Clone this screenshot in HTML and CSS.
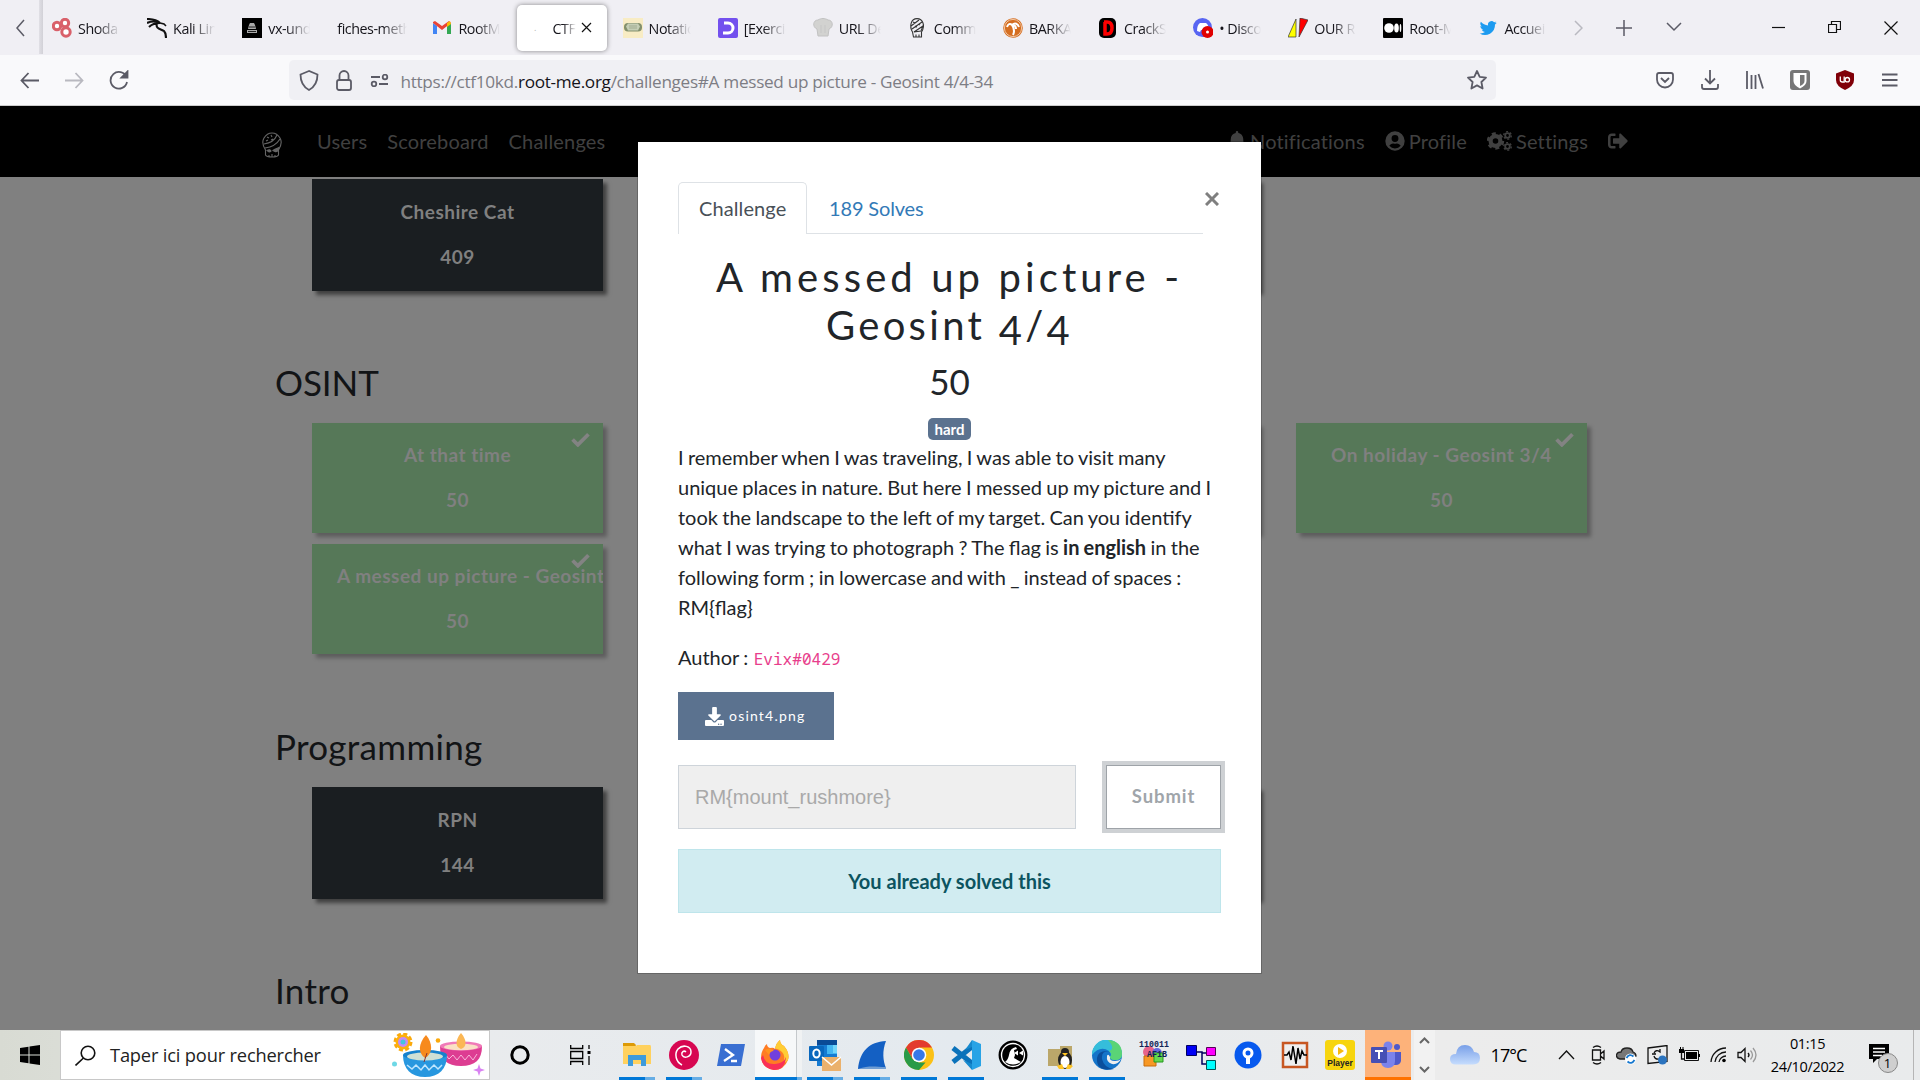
FILE: index.html
```html
<!DOCTYPE html>
<html lang="fr">
<head>
<meta charset="utf-8">
<title>CTF</title>
<link rel="stylesheet" href="styles.css">
</head>
<body>
<div class="screen">
  <header class="tabbar">
    <div class="tab-scroll"><svg width="10" height="18" viewBox="0 0 10 18" class="line"><path d="M9 1 2 9l7 8"/></svg></div>
    <div class="tab-edge"></div>
    <div class="tabs">
      <div class="tab"><svg class="fav" viewBox="0 0 20 20"><g fill="#fff" stroke="#d9606a" stroke-width="3"><circle cx="5" cy="8" r="3.7"/><circle cx="13" cy="5" r="3.7"/><circle cx="14" cy="14" r="4.2"/></g></svg><span>Shoda</span></div>
      <div class="tab"><svg class="fav" viewBox="0 0 20 20" fill="none" stroke="#111" stroke-width="1.6"><path d="M0 1c6 0 10 1 13 4M0 5c5-2 9-2 13 0M2 9c3-3 6-4 11-4M10 5c-2 6 4 6 7 8 2 2 2 4 2 7" stroke-width="2.1"/><path d="m13 5 4 1 2 2"/></svg><span>Kali Lin</span></div>
      <div class="tab"><svg class="fav" viewBox="0 0 20 20"><path fill="#000" d="M0 0h20v20H0z"/><path fill="#aaa" d="M7 7l1-2h4l1 2 1 4H6zM5 12h10v3H5z"/><path stroke="#222" d="M7 9h6M6 13.500h8"/></svg><span>vx-und</span></div>
      <div class="tab"><span class="wide">fiches-meth</span></div>
      <div class="tab"><svg class="fav" viewBox="0 0 20 20"><path fill="#4285f4" d="M1 5v11h4V8z"/><path fill="#34a853" d="M15 8v8h4V5z"/><path fill="#ea4335" d="M1 4l2-1 7 5 7-5 2 2-9 7-9-7z"/><path fill="#fbbc04" d="m15 5 3-2 1 3-4 3z"/></svg><span>RootM</span></div>
      <div class="tab active"><i class="fav-blank">.</i><span>CTF</span><svg class="tab-x line dark" width="11" height="11" viewBox="0 0 11 11"><path d="m1 1 9 9M10 1l-9 9"/></svg></div>
      <div class="tab"><svg class="fav" viewBox="0 0 20 20"><path fill="#f8ecc4" d="M0 0h20v20H0z"/><rect x="1" y="5" width="18" height="8.500" rx="4" fill="#83906d"/><path d="M5 5.500h10l2 3-2 4H5l-2-4z" fill="#c5ceb5"/><path d="M6 8h8M6 10h8" stroke="#a3ad92"/></svg><span>Notatio</span></div>
      <div class="tab"><svg class="fav" viewBox="0 0 20 20"><rect width="20" height="20" rx="2" fill="#7350ee"/><path d="M6 5h4a5 5 0 0 1 0 10H5" fill="none" stroke="#fff" stroke-width="3"/></svg><span>[Exercic</span></div>
      <div class="tab"><svg class="fav" viewBox="0 0 20 20"><path d="M4 11C-1 9 0 2 5 2c3-2 7-2 10 0 5 0 6 7 1 9l-1 7H5z" fill="#d2d2d0" stroke="#c2c2c2"/><path d="M8 7v8m4-8v8" stroke="#c6c6c6"/></svg><span>URL De</span></div>
      <div class="tab"><svg class="fav" viewBox="0 0 20 20" fill="none" stroke="#333" stroke-width="1.1"><path d="M4.500 14C1 8 3 .600 9 .600s8.500 7.400 4.500 13.400v5h-8z"/><path d="M3 8 11 2M4 11l10-7M6 14l9-6-2 5zM8 16.500v2.500m3-2.500v2.500M5 4l2 1m0 3 2 1m2-3 1 1"/></svg><span>Comm</span></div>
      <div class="tab"><svg class="fav" viewBox="0 0 20 20"><circle cx="10" cy="10" r="9.800" fill="#d56e21"/><circle cx="10" cy="10" r="8.600" fill="none" stroke="#f7dcc4" stroke-width=".8"/><path d="M10 17c2-4 1-7-1-10M9 7C7 5 5 6 4 9m5-2c3-3 6-1 7 2M9 7c2 0 4 1 4 4" stroke="#fff" stroke-width="2" fill="none"/></svg><span>BARKA</span></div>
      <div class="tab"><svg class="fav" viewBox="0 0 20 20"><rect x="1" width="17" height="20" rx="5"/><path fill="none" stroke="red" stroke-width="3.500" d="M6 4h3q5 0 5 6t-5 6H7V4"/></svg><span>CrackS</span></div>
      <div class="tab"><svg class="fav" viewBox="0 0 20 20"><circle cx="9.500" cy="9.500" r="9.500" fill="#5865f2"/><path fill="#fff" d="M4 13q0-6 3-8l6 0q3 2 3 8l-3 1-1-2H8l-1 2z"/><circle cx="14.500" cy="14" r="6" fill="#e00000"/><circle cx="14.500" cy="14" r="1.500" fill="#fff"/></svg><span>• Disco</span></div>
      <div class="tab"><svg class="fav" viewBox="0 0 20 20" stroke="#333" stroke-width=".7"><path fill="#ff0" d="M8 1v18H0z"/><path fill="red" d="m12 0 8 2-9 17z"/></svg><span>OUR R</span></div>
      <div class="tab"><svg class="fav" viewBox="0 0 20 20"><rect width="20" height="20" rx="1"/><g fill="#fff"><circle cx="6" cy="10" r="4.800"/><ellipse cx="13.500" cy="10" rx="2.300" ry="4.500"/><ellipse cx="17.500" cy="10" rx=".8" ry="4"/></g></svg><span>Root-M</span></div>
      <div class="tab"><svg class="fav" viewBox="0 0 24 24" fill="#1d9bf0"><path d="M22.500 5.700a8 8 0 0 1-2.400.7 4.200 4.200 0 0 0 1.800-2.300 8 8 0 0 1-2.600 1 4.200 4.200 0 0 0-7.200 3.800A12 12 0 0 1 3.500 4.500a4.200 4.200 0 0 0 1.300 5.600 4 4 0 0 1-1.900-.5 4.200 4.200 0 0 0 3.400 4.200 4 4 0 0 1-1.900.1 4.200 4.200 0 0 0 3.900 2.900A8.500 8.500 0 0 1 2 18.500a12 12 0 0 0 18.400-10.600 8.600 8.600 0 0 0 2.100-2.200z"/></svg><span>Accuei</span></div>
    </div>
    <div class="tab-tools">
      <svg class="line faint" width="9" height="16" viewBox="0 0 9 16"><path d="m1 1 7 7-7 7"/></svg>
      <svg class="line" width="16" height="16" viewBox="0 0 16 16"><path d="M8 0v16M0 8h16"/></svg>
      <svg class="line" width="16" height="10" viewBox="0 0 16 10"><path d="m1 1 7 7 7-7"/></svg>
    </div>
    <div class="win-tools">
      <svg class="line dark" width="13" height="13" viewBox="0 0 13 13"><path d="M0 6.500h13"/></svg>
      <svg class="line dark" width="13" height="13" viewBox="0 0 13 13"><path d="M.5 3.500h8v8h-8zM3.500 3V.5h9v8H9"/></svg>
      <svg class="line dark" width="14" height="14" viewBox="0 0 14 14"><path d="m.5.5 13 13m0-13-13 13"/></svg>
    </div>
  </header>

  <div class="toolbar">
    <div class="cells history">
      <svg class="line thick" width="19" height="17" viewBox="0 0 19 17"><path d="M19 8.500H1.500M8.500 1 1.500 8.500 8.500 16"/></svg>
      <svg class="line thick faint" width="19" height="17" viewBox="0 0 19 17"><path d="M0 8.500h17.500M10.500 1l7 7.500-7 7.500"/></svg>
      <svg class="line thick" width="20" height="20" viewBox="0 0 20 20"><path d="M17.500 7A8.300 8.300 0 1 0 18 12"/><path d="M12.500 7.500h6v-6z" fill="#5b5b66"/></svg>
    </div>
    <div class="urlbar">
      <svg class="line thick" width="20" height="21" viewBox="0 0 20 21"><path d="M10 1 1.500 4.500c0 7 2 12 8.500 15.500 6.500-3.500 8.500-8.500 8.500-15.500z"/></svg>
      <svg class="line thick" width="16" height="21" viewBox="0 0 16 21"><rect x="1" y="10" width="14" height="10" rx="2"/><path d="M3.500 10V5.500a4.500 4.500 0 0 1 9 0V10"/></svg>
      <svg class="line thick" width="19" height="13" viewBox="0 0 19 13"><circle cx="15" cy="3" r="2.300"/><circle cx="4" cy="10" r="2.300"/><path d="M1 3h9M9 10h9"/></svg>
      <div class="url">https://ctf10kd.<b>root-me.org</b>/challenges#A messed up picture - Geosint 4/4-34</div>
      <svg class="line thick" width="20" height="20" viewBox="0 0 20 20"><path d="m10 1 2.700 5.800 6.300.8-4.600 4.400 1.200 6.500L10 15.400l-5.600 3.100L5.600 12 1 7.600l6.300-.8z" stroke-linejoin="round"/></svg>
    </div>
    <div class="cells">
      <svg class="line thick" width="18" height="17" viewBox="0 0 18 17"><path d="M3 1h12q2 0 2 2v4.500a8 8 0 0 1-16 0V3q0-2 2-2zM5 6l4 4 4-4"/></svg>
      <svg class="line thick" width="18" height="20" viewBox="0 0 18 20"><path d="M9 0v13M4 8.500 9 13.500l5-5M1 14v3q0 2 2 2h12q2 0 2-2v-3"/></svg>
      <svg class="line thick" width="18" height="18" viewBox="0 0 18 18"><path d="M1 0v18M5.500 4v14M9.500 4v14M12.500 3l4.500 14.500"/></svg>
      <svg width="20" height="20" viewBox="0 0 20 20"><rect width="20" height="20" rx="3" fill="#777"/><path d="M3.500 3h13v8q0 4-6.500 7.500Q3.500 15 3.500 11z" fill="#fff"/><path d="M10 5h4.500v6q0 3-4.500 5z" fill="#777"/></svg>
      <svg width="18" height="20" viewBox="0 0 18 20"><path d="m9 0 9 3.500V10q0 6-9 10-9-4-9-10V3.500z" fill="#800008"/><path d="M4.300 6.500V10q0 2 2 2h1.900V6.500" fill="none" stroke="#fff" stroke-width="1.300"/><circle cx="11.300" cy="9.700" r="2.200" fill="none" stroke="#fff" stroke-width="1.300"/></svg>
      <svg class="line thick" width="16" height="14" viewBox="0 0 16 14"><path d="M0 1.500h15.500M0 7h15.500M0 12.500h15.500"/></svg>
    </div>
  </div>

  <main class="page">
    <nav class="navbar">
      <svg class="brand" width="20" height="26" viewBox="0 0 20 26"><path d="M3.500 18Q-1 11 2 6q3-5 8-5t8 5q3 5-1.500 12v5q-1 2-6.500 2t-6.500-2z"/><path d="M2 12c7-1 11-4 13-9M3 16c8-1 12-4 15-9M5 5l2 1M9 3l1 2M4 9l2-1M9 8l2-1M7 23v2M10 22v3M13 23v2"/><path d="M5 18.500q3-1.500 4 .500-2 2-4-.500zm6 0q1-1 6-3-1 5-4 4z" fill="#666"/></svg>
      <div class="nav-left"><a>Users</a><a>Scoreboard</a><a>Challenges</a></div>
      <div class="nav-right">
        <a><svg width="18" height="20" viewBox="0 0 448 512"><path d="M224 512c35 0 64-29 64-64H160c0 35 29 64 64 64zm215-150c-19-21-55-52-55-154 0-78-54-140-128-155V32a32 32 0 0 0-64 0v21C118 68 64 130 64 208c0 102-36 133-55 154-6 6-9 14-9 22 0 16 13 32 32 32h384c19 0 32-16 32-32 0-8-3-16-9-22z"/></svg><span>Notifications</span></a>
        <a><svg width="20" height="20" viewBox="0 0 496 512"><path d="M248 8a248 248 0 1 0 0 496 248 248 0 0 0 0-496zm0 96a88 88 0 1 1 0 176 88 88 0 0 1 0-176zm0 344a191 191 0 0 1-146-68c19-35 55-60 98-60 3 0 5 0 7 1a135 135 0 0 0 82 0l7-1c43 0 79 25 98 60a191 191 0 0 1-146 68z"/></svg><span>Profile</span></a>
        <a><svg width="25" height="20" viewBox="0 0 25 20" class="gears"><circle cx="8.500" cy="10" r="4.900" stroke-width="4.200"/><circle cx="8.500" cy="10" r="7.500" stroke-width="2.400" stroke-dasharray="4 3.850"/><circle cx="20.500" cy="4.500" r="2.300" stroke-width="1.800"/><circle cx="20.500" cy="4.500" r="3.800" stroke-width="1.300" stroke-dasharray="2 2"/><circle cx="20.500" cy="15.500" r="2.300" stroke-width="1.800"/><circle cx="20.500" cy="15.500" r="3.800" stroke-width="1.300" stroke-dasharray="2 2"/></svg><span>Settings</span></a>
        <a><svg width="20" height="20" viewBox="0 0 512 512"><path d="m497 273-168 168c-15 15-41 4-41-17v-96H152c-13 0-24-11-24-24v-96c0-13 11-24 24-24h136V88c0-21 26-32 41-17l168 168c9 9 9 25 0 34zM192 436v-40c0-7-5-12-12-12H96c-18 0-32-14-32-32V160c0-18 14-32 32-32h84c7 0 12-5 12-12V76c0-7-5-12-12-12H96c-53 0-96 43-96 96v192c0 53 43 96 96 96h84c7 0 12-5 12-12z"/></svg></a>
      </div>
    </nav>

    <section class="cat first">
      <div class="grid">
        <article class="card"><p>Cheshire Cat</p><p>409</p></article>
        <article class="card"></article>
        <article class="card"></article>
      </div>
    </section>
    <section class="cat osint">
      <h3>OSINT</h3>
      <div class="grid">
        <article class="card solved"><svg class="check" viewBox="0 0 18 14"><path d="m1.500 7 5 5L16.500 2"/></svg><p>At that time</p><p>50</p></article>
        <article class="card solved"></article>
        <article class="card solved"></article>
        <article class="card solved"><svg class="check" viewBox="0 0 18 14"><path d="m1.500 7 5 5L16.500 2"/></svg><p>On holiday - Geosint 3/4</p><p>50</p></article>
        <article class="card solved"><svg class="check" viewBox="0 0 18 14"><path d="m1.500 7 5 5L16.500 2"/></svg><p class="long">A messed up picture - Geosint</p><p>50</p></article>
      </div>
    </section>
    <section class="cat">
      <h3>Programming</h3>
      <div class="grid">
        <article class="card"><p>RPN</p><p>144</p></article>
        <article class="card"></article>
        <article class="card"></article>
      </div>
    </section>
    <section class="cat">
      <h3>Intro</h3>
    </section>
  </main>

  <div class="modal">
    <div class="modal-top">
      <div class="pills"><div class="pill on">Challenge</div><div class="pill">189 Solves</div></div>
      <svg class="close" width="14" height="14" viewBox="0 0 14 14"><path d="m1 1 12 12M13 1 1 13"/></svg>
    </div>
    <h2><span class="t1">A messed up picture -</span><br><span class="t2">Geosint <i>4</i>/<i>4</i></span></h2>
    <div class="points">50</div>
    <div class="badge-row"><span class="badge">hard</span></div>
    <p class="desc">I remember when I was traveling, I was able to visit many<br>unique places in nature. But here I messed up my picture and I<br>took the landscape to the left of my target. Can you identify<br>what I was trying to photograph ? The flag is <b>in english</b> in the<br>following form ; in lowercase and with _ instead of spaces :<br>RM{flag}</p>
    <p class="desc">Author : <code>Evix#0429</code></p>
    <div class="file"><svg width="19" height="19" viewBox="0 0 512 512" fill="#fff"><path d="M216 0h80c13 0 24 11 24 24v168h88c18 0 27 21 14 34L270 378c-7 7-20 7-28 0L90 226c-13-13-4-34 14-34h88V24c0-13 11-24 24-24zm296 376v112c0 13-11 24-24 24H24c-13 0-24-11-24-24V376c0-13 11-24 24-24h147l49 49c20 20 52 20 72 0l49-49h147c13 0 24 11 24 24zm-124 88a20 20 0 1 0-40 0 20 20 0 0 0 40 0zm64 0a20 20 0 1 0-40 0 20 20 0 0 0 40 0z"/></svg><span>osint4.png</span></div>
    <div class="answer"><div class="field">RM{mount_rushmore}</div><div class="submit">Submit</div></div>
    <div class="alert">You already solved this</div>
  </div>

  <footer class="taskbar">
    <div class="start"><svg width="20" height="20" viewBox="0 0 20 20"><path d="M0 3l8.500-1.200v7.700H0zM9.500 1.600 20 0v9.500H9.500zM0 10.500h8.500v7.700L0 17zM9.500 10.500H20V20L9.500 18.400z"/></svg></div>
    <div class="search">
      <svg class="lens" width="21" height="21" viewBox="0 0 21 21"><circle cx="13" cy="8" r="6.800"/><path d="M8.500 13 .5 20.500"/></svg>
      <span>Taper ici pour rechercher</span>
      <svg class="candles" width="93" height="45" viewBox="0 0 93 45">
        <circle cx="11" cy="9" r="8" fill="none" stroke="#fba90c" stroke-width="3" stroke-dasharray="4 2.280"/><circle cx="11" cy="9" r="7.500" fill="#fdb00e"/><circle cx="11" cy="9" r="5" fill="#c58af5"/><circle cx="11" cy="9" r="2.500" fill="#45c5e0"/><circle cx="46" cy="7.500" r="2.300" fill="#fba90c"/><circle cx="2.500" cy="31" r="2.500" fill="#6ed8e6"/>
        <path d="M48 13c0 14 7 20 21 20s21-6 21-20z" fill="#dd3d92"/><ellipse cx="69" cy="13" rx="21" ry="4.500" fill="#f07ab8"/><ellipse cx="69" cy="14" rx="17" ry="3.300" fill="#fae0c5"/><path d="M69 0c-6 7-6 14 0 16 6-2 6-9 0-16z" fill="#fbb755"/><path d="m53 21 4 5 4-4 4 5 4-5 4 5 4-5 4 5 4-6" fill="none" stroke="#f9b6da"/>
        <path d="M11 22c0 14 8 22 22 22s22-8 22-22z" fill="#2797df"/><ellipse cx="33" cy="22" rx="22" ry="5" fill="#1681cd"/><ellipse cx="33" cy="23.500" rx="18" ry="4" fill="#cfe0d5"/><path d="M34 2c-8 9-8 18-1 23 8-4 8-15 1-23z" fill="#f78a1d"/><path d="M32 29l3-9" stroke="#833"/><path d="m15 32 5 4 4-4 5 5 4-5 4 5 5-5 4 4 4-4" fill="none" stroke="#bfe6ff" stroke-width="1.500"/>
        <path d="m87 31 1.500 4.500L93 37l-4.500 1.500L87 43l-1.500-4.500L81 37l4.500-1.500z" fill="#d982f2"/>
      </svg>
    </div>
    <div class="sys"><svg width="20" height="20" viewBox="0 0 20 20"><circle cx="10" cy="10" r="8.200" fill="none" stroke="#000" stroke-width="3"/></svg></div>
    <div class="sys"><svg width="21" height="20" viewBox="0 0 21 20" fill="none" stroke="#000" stroke-width="1.300"><path d="M.7 0v3.500h12V0M.7 20v-3.500h12V20M.7 6.500h12v7H.7zM19 0v4M19 11v9"/><path d="M17.500 6h3v3h-3z" fill="#000" stroke="none"/></svg></div>

    <div class="apps">
      <div class="app many"><svg width="30" height="30" viewBox="0 0 30 30"><path d="M1 3h11l2 2-2 4H1z" fill="#dd9a06"/><path d="M1 6h13l1-1h13q1 0 1 2v17H1z" fill="#ffd15e"/><path d="M6 26V15h18v11h-5v-6h-8v6z" fill="#3e9bdb"/></svg></div>
      <div class="app many"><svg width="30" height="30" viewBox="0 0 30 30"><circle cx="15" cy="15" r="15" fill="#d70751"/><path d="M13 25C7 22 5 14 9 9c5-5 13-3 13 3 0 5-7 7-9 3-1-3 2-5 4-3" fill="none" stroke="#fff" stroke-width="1.500"/></svg></div>
      <div class="app none"><svg width="30" height="30" viewBox="0 0 30 30"><path d="M5 4h24l-4 22H1z" fill="#396fd2"/><path d="m9 9 8 6-9 6m7 0h6" fill="none" stroke="#fff" stroke-width="2.300"/></svg></div>
      <div class="app active-app"><svg width="30" height="30" viewBox="0 0 30 30"><path d="M4 8q1-3 3-4 0 3 3 4 4-1 5 1 1-6 5-9 0 4 4 6 6 7 4 14-4 10-14 10Q3 29 1 18 1 12 4 8z" fill="#ff7c24"/><path d="M20 0q0 4 4 6 6 7 4 14-2 3-5 3 3-7-1-11-5-4-7-3 1-6 5-9z" fill="#ffcd35"/><path d="M3 15q2 10 12 9 9-1 11-7-1 13-12 13Q3 29 1 18z" fill="#f93058"/><circle cx="15" cy="15" r="5.500" fill="#7140dc"/><path d="M5 10q5-3 9 1-4 0-5 4z" fill="#ff951f"/></svg></div>
      <div class="app many"><svg width="32" height="32" viewBox="0 0 32 32"><path d="M8 1h20v26H8z" fill="#167bd2"/><path d="M8 1h20v5H8z" fill="#0a4b97"/><path d="M18 6h10v9H18z" fill="#43b6f2"/><path d="M24 6h4v8h-4z" fill="#73d6fb"/><rect y="7" width="15" height="15" rx="1" fill="#0867bd"/><ellipse cx="7.500" cy="14.500" rx="3.200" ry="4" fill="none" stroke="#fff" stroke-width="2"/><path d="M13 18h19v14H13z" fill="#ebb16c"/><path d="m13 18 9.500 8 9.500-8" fill="none" stroke="#fff" stroke-width="1.500"/></svg></div>
      <div class="app many"><svg width="30" height="30" viewBox="0 0 30 30"><path d="M1 29C3 11 12 2 29 1c-4 10-3 20 0 27z" fill="#1460c3"/><path d="M1 29c12-4 17-2 28-2v2z" fill="#6f9dd3"/></svg></div>
      <div class="app"><svg width="30" height="30" viewBox="0 0 30 30"><circle cx="15" cy="15" r="15" fill="#fbc116"/><path d="M2 7.500A15 15 0 0 1 28 7.500H15L8.500 19z" fill="#e33b2e"/><path d="M2 7.500 8.500 19 15 22.500h6.500L15 30A15 15 0 0 1 2 7.500z" fill="#299a47"/><circle cx="15" cy="15" r="7.300" fill="#fff"/><circle cx="15" cy="15" r="5.800" fill="#3878e8"/></svg></div>
      <div class="app"><svg width="30" height="30" viewBox="0 0 30 30"><path d="M2 8 22 24M2 22 22 6" stroke="#0b72ba" stroke-width="5"/><path d="m21 0 9 4v22l-9 4z" fill="#28a3e6"/><path d="m21 0-7 10 7-3zM21 30 12 20l9 4z" fill="#168ace"/></svg></div>
      <div class="app none"><svg width="30" height="30" viewBox="0 0 30 30"><circle cx="15" cy="15" r="13.300" fill="#fff" stroke="#000" stroke-width="2.300"/><circle cx="15" cy="15" r="10.800"/><path d="M7 22q3-2 4-7 1-7 7-8l1 2-3 1 1 5-1 3 7 4q-8 5-16 0z" fill="#fff"/><path d="m16 13 4-2.500v5zm5 0 4-2.500v5z" fill="#fff"/></svg></div>
      <div class="app"><svg width="30" height="30" viewBox="0 0 30 30"><path d="M3 9h12V6h12v20H3z" fill="#bba76a"/><ellipse cx="20" cy="20" rx="7" ry="9" fill="#222"/><circle cx="20" cy="12" r="4" fill="#222"/><ellipse cx="20" cy="22" rx="4.500" ry="6" fill="#fff"/><path d="m17 13 3 3 3-3zM12 26l5-2 2 5h-5zm11-2 5 2-3 3h-4z" fill="#ffc524"/></svg></div>
      <div class="app"><svg width="30" height="30" viewBox="0 0 30 30"><circle cx="15" cy="15" r="15" fill="#1474c9"/><path d="M0 15A15 15 0 0 1 30 14q0 6-7 6-5 0-5-3 2-3-1-6Q8 5 0 15z" fill="#35bddb"/><path d="M16 0q14 1 14 14 0 6-7 6-5 0-5-3 3-3-1-6 7-2-1-11z" fill="#5ad476"/><path d="M17 11q-8 0-7 8 2 9 12 10Q4 32 5 18q1-8 12-7z" fill="#0a4e9c"/><path d="M18 17q-1 4 5 4 4 0 6-2-3 6-9 5-6-2-5-8 1-3 3 1z" fill="#eee"/></svg></div>
      <div class="app none"><svg width="30" height="30" viewBox="0 0 30 30"><circle cx="10" cy="12" r="6" fill="#e7638b"/><circle cx="18" cy="13" r="5" fill="#6566dc"/><path d="M5 16h12v10H5z" fill="#f79824" stroke="#c96d0a"/><path d="M15 13h9v9h-9z" fill="#65d950" stroke="#259720"/><g class="bits"><text x="0" y="7">110011</text><text x="8" y="17">AF1B</text></g></svg></div>
      <div class="app none"><svg width="30" height="30" viewBox="0 0 30 30"><path d="M11 12h5v12h5M16 13h5" stroke="#00005d" stroke-width="1.500" fill="none"/><path fill="#0000f5" stroke="#000060" d="M.5 5.500h10v10H.5z"/><path fill="#f0f" stroke="#505" d="M20.500 7.500h9v8h-9z"/><path fill="#0ff" stroke="#055" d="M20.500 20.500h9v9h-9z"/></svg></div>
      <div class="app none"><svg width="28" height="28" viewBox="0 0 28 28"><circle cx="14" cy="14" r="13.500" fill="#0759ee"/><circle cx="14" cy="12" r="4" fill="none" stroke="#fff" stroke-width="3"/><path d="M12 15h4v8h-4z" fill="#fff"/></svg></div>
      <div class="app none"><svg width="28" height="28" viewBox="0 0 28 28"><path d="M2 2h24v24H2z" fill="#eee" stroke="#c75621" stroke-width="2.500"/><path d="M3 14h3l2-3 2 8 2-14 3 18 2-16 2 11 2-8 2 4h3" fill="none" stroke="#000" stroke-width="1.500"/></svg></div>
      <div class="app none player-app"><svg width="30" height="30" viewBox="0 0 30 30"><rect width="30" height="30" rx="3" fill="#f7d50e"/><circle cx="15" cy="11" r="7" fill="#fff"/><path d="m13 7 6 4-6 4z" fill="#f7ba0e"/><text x="15" y="25.500" text-anchor="middle" class="player">Player</text></svg></div>
      <div class="app teams"><svg width="30" height="30" viewBox="0 0 30 30"><circle cx="17" cy="6" r="4.500" fill="#7b83eb"/><circle cx="26" cy="7" r="3" fill="#5059c9"/><path d="M21 12h9v9q-1 4-5 4h-4z" fill="#5059c9"/><path d="M10 12h14v9q0 7-7 7t-7-7z" fill="#7b83eb"/><rect y="7" width="16" height="16" rx="1" fill="#4650b5"/><path d="M4 11h8M8 11v8" stroke="#fff" stroke-width="2"/></svg></div>
    </div>
    <div class="scroller"><svg width="11" height="7" viewBox="0 0 11 7"><path d="m1 6 4.500-4.500L10 6"/></svg><svg width="11" height="7" viewBox="0 0 11 7"><path d="m1 1 4.500 4.500L10 1"/></svg></div>
    <div class="weather"><svg width="30" height="20" viewBox="0 0 30 20"><defs><linearGradient id="sky" x2="0" y2="1"><stop stop-color="#789fe8"/><stop offset="1" stop-color="#c5dcfd"/></linearGradient></defs><path d="M6 19.500q-6 0-6-5.500 0-5 6-5Q7 0 15 0q7 0 9 7 6 0 6 6 0 6.500-7 6.500z" fill="url(#sky)"/></svg><span>17°C</span></div>
    <div class="tray">
      <svg width="17" height="20" viewBox="0 0 17 20"><path d="m1 14 7.500-8 7.500 8"/></svg>
      <svg class="cam" width="16" height="20" viewBox="0 0 16 20"><path d="M2.500 5h8v10h-8zM10.500 9l3.500-3v8l-3.500-3M3 2.500q4-3 8 0M3 17.500q4 3 8 0"/></svg>
      <svg width="21" height="20" viewBox="0 0 21 20"><path d="M4 14q-4-1-3.500-4T5 7q1-4 6-4 5 0 6 4 3 1 3 4l-8 3z" fill="#777" stroke="#222"/><circle cx="14.500" cy="14" r="5.500" fill="#fff" stroke="none"/><path d="M10.500 13q3-5 7-1.500M18.500 15q-3 5-7 1.500" stroke="#1678cf" stroke-width="1.800"/></svg>
      <svg width="21" height="20" viewBox="0 0 21 20"><path d="M1 3 20 .500v16L1 18.500zM7 8q2-4 6-1v-3M7 11q1 4 6 3M5 9h4"/><circle cx="15.500" cy="15" r="4.500" fill="#2b74bf" stroke="none"/></svg>
      <svg width="21" height="20" viewBox="0 0 21 20"><path d="M5.500 5.500h14v10h-14z" stroke-width="1"/><path d="M7 7h11v7H7zM19 9h2v3h-2zM0 4h5v4H0zM1 2h1v3H1zM3.500 2h1v3h-1z" fill="#000" stroke="none"/><path d="M2.500 8v6h3"/></svg>
      <svg width="17" height="20" viewBox="0 0 17 20"><path d="M1 17A15 15 0 0 1 16 3M5 17A11 11 0 0 1 16 7M9 17a7 7 0 0 1 7-6"/><circle cx="14" cy="15.500" r="1.800" fill="#000" stroke="none"/></svg>
      <svg width="21" height="20" viewBox="0 0 21 20"><path d="M1 7.500h3l4-4v13l-4-4H1zM11 8q2 2 0 4"/><path d="M13.500 5.500q4 4.500 0 9M16 3q6 7 0 14" stroke="#999"/></svg>
    </div>
    <div class="clock"><span>01:15</span><span>24/10/2022</span></div>
    <div class="notif"><svg width="20" height="20" viewBox="0 0 20 20"><path d="M0 0h20v15H8l-4 4v-4H0z"/><path d="M4 4.500h12M4 8h12M4 11.500h9" stroke="#fff" stroke-width="1.300"/></svg><span class="count">1</span></div>
    <div class="desk"></div>
  </footer>
</div>
</body>
</html>
```
FILE: styles.css
```css
* { box-sizing: border-box; }
body { margin: 0; overflow: hidden; background: #808080; }
svg { display: block; flex: none; }
p, h2, h3 { margin: 0; }
h2, h3 { font-weight: 400; }
.screen { position: relative; width: 1920px; height: 1080px; overflow: hidden; display: flex; flex-direction: column; font-family: "Open Sans", "Noto Sans", sans-serif; }

.line { fill: none; stroke: #5b5b66; stroke-width: 1.5; }
.line.thick { stroke-width: 1.8; }
.line.dark { stroke: #111; stroke-width: 1.2; }
.line.faint { stroke: #b9b9c0; }

/* browser tabs */
.tabbar { height: 55px; background: #f0eff4; display: flex; align-items: center; flex: none; }
.tab-scroll { width: 39px; display: flex; justify-content: center; }
.tab-edge { width: 4px; height: 54px; background: linear-gradient(90deg, #e0dfe5, #d2d1d7); margin-right: -1px; align-self: flex-start; }
.tabs { display: flex; width: 1521.6px; flex: none; }
.tab { width: 95.1px; height: 46px; padding-left: 10px; display: flex; align-items: center; flex: none; }
.tab span { width: 42px; margin-left: 6px; padding-top: 2px; overflow: hidden; white-space: nowrap; font-size: 14.3px; letter-spacing: -.45px; color: #15141a; -webkit-mask-image: linear-gradient(90deg, #000 45%, transparent); mask-image: linear-gradient(90deg, #000 45%, transparent); }
.tab span.wide { width: 70px; margin-left: 0; -webkit-mask-image: linear-gradient(90deg, #000 65%, transparent); mask-image: linear-gradient(90deg, #000 65%, transparent); }
.fav { width: 20px; height: 20px; }
.tab.active { width: 90px; margin-right: 5.1px; background: #fff; border-radius: 5px; box-shadow: 0 0 5px rgba(0, 0, 0, .45); }
.tab.active span { width: 24px; margin-left: 5px; }
.fav-blank { width: 20px; font-size: 9px; color: #bbb; padding-left: 7px; }
.tab-x { margin-left: 5px; margin-top: -1px; }
.tab-tools { display: flex; align-items: center; gap: 36px; padding-left: 10px; width: 199px; }
.tab-tools svg:nth-child(2) { margin-left: -3px; }
.tab-tools svg:nth-child(3) { margin-left: -2px; margin-top: -2px; }
.win-tools { display: flex; align-items: center; gap: 43px; margin-left: 9px; }

/* address row */
.toolbar { height: 51px; background: #f9f9fb; border-bottom: 1px solid #ccc; display: flex; align-items: center; padding: 0 7.5px 0 6.5px; flex: none; }
.cells { display: grid; grid-auto-flow: column; grid-auto-columns: 45px; place-items: center; }
.history { margin-right: 147px; }
.urlbar { width: 1207px; height: 40px; margin-right: auto; background: #f0f0f4; border-radius: 5px; display: flex; align-items: center; padding: 0 9px 0 10px; }
.urlbar svg:nth-child(2) { margin-left: 17px; }
.urlbar svg:nth-child(3) { margin: 0 12px 0 18px; }
.url { flex: 1; padding-top: 2px; font-size: 17.2px; letter-spacing: -.315px; color: #7d7d84; white-space: nowrap; }
.url b { font-weight: 400; color: #15141a; }

/* challenge page */
.page { height: 924px; flex: none; overflow: hidden; background: #808080; font: 20px/30px Lato, sans-serif; color: #121416; }
.navbar { height: 71px; background: #000; color: #404040; display: flex; align-items: center; padding: 0 292px 0 262px; }
.navbar a { display: flex; align-items: center; gap: 4px; letter-spacing: .18px; }
.navbar svg { fill: #404040; }
.navbar .brand { fill: none; stroke: #666; stroke-width: 1.1; margin-top: 6px; }
.navbar .gears { fill: none; stroke: #404040; }
.nav-left, .nav-right { display: flex; gap: 20px; padding-bottom: 2px; }
.nav-left { margin-left: 35px; }
.nav-right { margin-left: auto; }
.cat { padding-left: 275px; }
.cat h3 { height: 42px; font-size: 35px; line-height: 42px; letter-spacing: .3px; }
.cat.first { padding-top: 2px; }
.grid { margin: 20px 0 70px 37px; display: grid; grid-template-columns: repeat(4, 291px); column-gap: 37px; row-gap: 11px; }
.cat.first .grid { margin-top: 0; }
.cat.osint .grid { margin-bottom: 71px; }
.cat.osint h3 { letter-spacing: -.1px; }
.card { position: relative; height: 112px; padding-top: 18px; background: #1a1e21; color: #808080; box-shadow: 4px 4px 4px rgba(0, 0, 0, .5); text-align: center; font-weight: 700; font-size: 19px; letter-spacing: .5px; white-space: nowrap; }
.card p { overflow: hidden; }
.card p + p { margin-top: 15px; }
.card.solved { height: 110px; padding-top: 17px; background: #567858; box-shadow: 4px 4px 4px rgba(0, 0, 0, .28); color: #808080; }
.card .long { text-align: left; padding-left: 25px; }
.check { position: absolute; right: 13px; top: 9px; width: 19px; height: 15px; fill: none; stroke: #838383; stroke-width: 3.6; }

/* dialog */
.modal { position: absolute; left: 638px; top: 142px; width: 623px; height: 831px; background: #fff; box-shadow: 0 0 0 1px rgba(0, 0, 0, .2); padding: 40px; font: 20px/30px Lato, sans-serif; color: #212529; }
.modal-top { display: flex; align-items: flex-start; height: 52px; }
.pills { width: 525px; height: 52px; border-bottom: 1px solid #dee2e6; display: flex; flex: none; }
.pill { height: 52px; padding: 11px 22px; color: #337ab7; letter-spacing: -.15px; }
.pill.on { width: 129px; padding: 10px 0 0 20px; border: 1px solid #dee2e6; border-bottom: 0; border-radius: 5px 5px 0 0; background: #fff; color: #495057; letter-spacing: .1px; }
.close { margin: 10px 0 0 2px; fill: none; stroke: #7f7f7f; stroke-width: 3; }
.modal h2 { margin-top: 19px; font-size: 40px; line-height: 48px; text-align: center; white-space: nowrap; }
.t1 { letter-spacing: 4.1px; }
.t2 { letter-spacing: 3.3px; }
.modal h2 i { font-style: normal; display: inline-block; transform: translateY(5px); }
.points { margin-top: 11px; font-size: 35px; line-height: 42px; text-align: center; }
.badge-row { height: 22px; margin-top: 16px; display: flex; justify-content: center; }
.badge { width: 43px; height: 22px; border-radius: 5px; background: #5b728f; color: #fff; font-size: 15px; line-height: 23px; font-weight: 700; text-align: center; }
.desc { margin-top: 2px; white-space: nowrap; word-spacing: -.8px; }
.desc + .desc { margin-top: 20px; }
.desc code { font: 16.100px "Noto Sans Mono", "DejaVu Sans Mono", monospace; color: #e83e8c; margin-left: 1px; }
.file { margin-top: 20px; width: 156px; height: 48px; background: #5b728f; color: #fff; display: flex; align-items: center; padding-left: 27px; gap: 5px; font-size: 14px; letter-spacing: 1.2px; }
.answer { margin-top: 25px; display: flex; justify-content: space-between; }
.field { width: 398px; height: 64px; padding: 0 16px; border: 1px solid #ced4da; background: #efefef; color: #a9a9a9; font: 20px/62px "Liberation Sans", Arial, sans-serif; }
.submit { width: 115px; height: 64px; border: 1px solid #9ea3a8; box-shadow: 0 0 0 4px #ced1d4; color: #a0a5aa; font-weight: 700; line-height: 61px; text-align: center; letter-spacing: .9px; font-size: 18.500px; }
.alert { margin-top: 20px; height: 64px; border: 1px solid #bee5eb; background: #d1ecf1; color: #0c5460; text-align: center; font-weight: 700; line-height: 62px; }

/* taskbar */
.taskbar { height: 50px; flex: none; display: flex; align-items: center; background: linear-gradient(90deg, #d8dbd3, #e9ebed 25%, #e4eaef 50%, #ececec 75%, #e9ebec); color: #000; }
.start { width: 60px; padding-left: 20px; }
.search { width: 430px; height: 50px; background: #fff; border: 1px solid #c8c8c8; display: flex; align-items: center; padding-left: 14px; }
.search .lens { fill: none; stroke: #111; stroke-width: 1.6; }
.search span { margin-left: 14px; width: 282px; padding-bottom: 2px; font-size: 18.3px; letter-spacing: -.18px; color: #222; white-space: nowrap; }
.sys { width: 60px; display: flex; justify-content: center; }
.apps { display: flex; margin-left: 3.5px; height: 50px; }
.app { width: 47px; height: 50px; display: flex; align-items: center; justify-content: center; background: linear-gradient(#0078d7, #0078d7) 50% 100% / 36px 3px no-repeat; }
.app.many { background: linear-gradient(90deg, #0078d7 26px, #66ade5 26px) 50% 100% / 36px 3px no-repeat; }
.app.none { background: none; }
.app.active-app { background: linear-gradient(90deg, #0078d7 42px, #66ade5 42px) 0 100% / 47px 3px no-repeat, linear-gradient(90deg, #f6f8f9 41px, #c5c9cc 41px, #c5c9cc 42px, #f0f2f3 42px); padding-right: 6px; }
.app.player-app { padding-right: 4px; }
.app.teams { width: 46px; margin-left: -1px; background: #fdb27a; border-bottom: 3px solid #ff7200; padding: 3px 3px 0 0; }
.bits { font: 700 8.300px "Liberation Mono", monospace; fill: #125; }
.player { font: 700 8.500px "Liberation Sans", sans-serif; fill: #222; }
.scroller { width: 21px; height: 50px; margin-left: 3px; background: #f2f2f2; display: flex; flex-direction: column; align-items: center; justify-content: space-between; padding: 7px 0 7px; }
.scroller svg { fill: none; stroke: #666; stroke-width: 2; }
.weather { display: flex; align-items: center; gap: 11px; margin-left: 15px; width: 108px; font-size: 18px; letter-spacing: -.9px; white-space: nowrap; }
.tray { display: flex; align-items: center; width: 201px; justify-content: space-between; }
.tray svg { fill: none; stroke: #111; stroke-width: 1.3; }
.tray .cam { margin-left: 5px; }
.clock { width: 92px; margin-left: 3px; display: flex; flex-direction: column; align-items: center; font-size: 14.500px; line-height: 23px; letter-spacing: -.35px; }
.notif { position: relative; margin-left: 15px; width: 44px; padding-bottom: 2px; }
.count { position: absolute; left: 9px; top: 9px; width: 20px; height: 20px; border-radius: 50%; background: #cfcfcf; border: 1px solid #888; font-size: 13px; line-height: 18px; text-align: center; }
.desk { width: 1px; height: 50px; background: #b5b5b5; }
```
